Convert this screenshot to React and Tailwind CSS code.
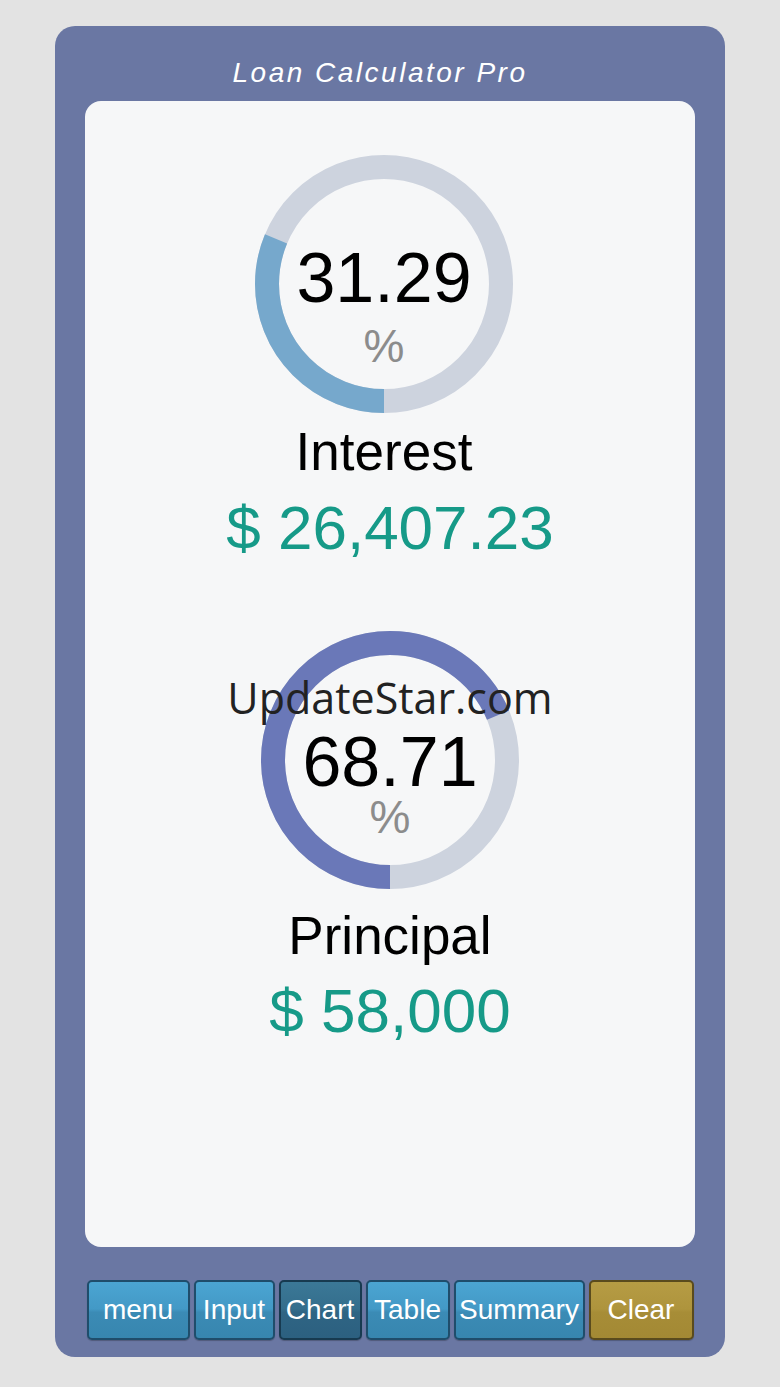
import React from 'react';

// Donut ring: gray track, coloured arc starting at 6 o'clock going clockwise
function Ring({ pct, color }) {
  const r = 117;
  const c = 2 * Math.PI * r;
  return (
    <svg width="260" height="260" viewBox="0 0 260 260" className="block">
      <circle cx="130" cy="130" r={r} fill="none" stroke="#cdd3de" strokeWidth="24" />
      <circle
        cx="130"
        cy="130"
        r={r}
        fill="none"
        stroke={color}
        strokeWidth="24"
        strokeDasharray={`${(pct / 100) * c} ${c}`}
        transform="rotate(90 130 130)"
      />
    </svg>
  );
}

function Gauge({ pct, color, padClass, gapClass, className }) {
  return (
    <div className={`relative w-[260px] h-[260px] ${className}`}>
      <Ring pct={pct} color={color} />
      <div className={`absolute inset-0 flex flex-col items-center ${padClass}`}>
        <div className="text-[70px] leading-[60px] text-black">{pct.toFixed(2)}</div>
        <div className={`text-[46px] leading-[40px] text-[#8c8c8c] ${gapClass}`}>%</div>
      </div>
    </div>
  );
}

const buttons = [
  { label: 'menu', w: 'w-[103px]', kind: 'blue' },
  { label: 'Input', w: 'w-[81px]', kind: 'blue' },
  { label: 'Chart', w: 'w-[83px]', kind: 'active' },
  { label: 'Table', w: 'w-[84px]', kind: 'blue' },
  { label: 'Summary', w: 'w-[131px]', kind: 'blue' },
  { label: 'Clear', w: 'w-[105px]', kind: 'gold' },
];

const kindClass = {
  blue: 'border-[#1f4d6b] bg-[linear-gradient(180deg,#4ba5d2_0%,#4399c6_48%,#3b8bb5_54%,#3786af_100%)]',
  active: 'border-[#173a50] bg-[linear-gradient(180deg,#3b7897_0%,#346e8c_48%,#2f6584_54%,#2c6080_100%)]',
  gold: 'border-[#5a4b1d] bg-[linear-gradient(180deg,#b69c44_0%,#ae943d_48%,#a78d37_54%,#a38934_100%)]',
};

export default function App() {
  return (
    <div className="relative min-h-screen bg-[#e3e3e3] pt-[26px] font-['Liberation_Sans',Arial,sans-serif]">
      <div className="mx-auto w-[670px] rounded-[20px] bg-[#6a77a3] px-[30px] pt-[32px] pb-[17px]">
        {/* Title */}
        <h1 className="pr-[20px] text-center text-[28px] leading-[30px] italic text-white tracking-[2.5px]">
          Loan Calculator Pro
        </h1>

        {/* Chart card */}
        <div className="mt-[13px] h-[1146px] rounded-[16px] bg-[#f6f7f8] flex flex-col items-center pt-[53px]">
          <Gauge pct={31.29} color="#76a8cc" padClass="pt-[94px]" gapClass="mt-[18px]" className="mr-[12px]" />
          <div className="mt-[8px] mr-[12px] text-[53px] leading-[60px] text-black">Interest</div>
          <div className="mt-[11px] text-[62px] leading-[70px] text-[#169a88]">$ 26,407.23</div>

          <Gauge pct={68.71} color="#6a78b8" padClass="pt-[102px]" gapClass="mt-[5px]" className="mt-[67px]" />
          <div className="mt-[16px] text-[53px] leading-[60px] text-black">Principal</div>
          <div className="mt-[10px] text-[62px] leading-[70px] text-[#169a88]">$ 58,000</div>
        </div>

        {/* Bottom nav */}
        <div className="mt-[33px] flex justify-center gap-[4px]">
          {buttons.map((b) => (
            <button
              key={b.label}
              className={`${b.w} h-[60px] rounded-[5px] border-2 ${kindClass[b.kind]} text-white text-[28px] leading-[56px] text-center shadow-[0_1px_1px_rgba(0,0,0,0.25)]`}
            >
              {b.label}
            </button>
          ))}
        </div>
      </div>

      {/* Watermark */}
      <div className="pointer-events-none absolute left-0 right-0 top-[676px] text-center text-[43px] leading-[43px] text-[#222] font-['Open_Sans','Noto_Sans',sans-serif]">
        UpdateStar.com
      </div>
    </div>
  );
}
